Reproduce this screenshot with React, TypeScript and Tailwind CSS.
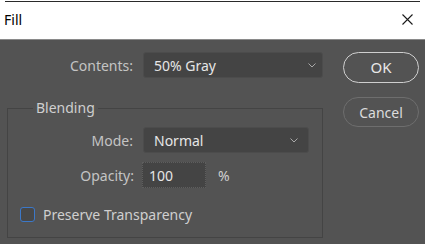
import React from "react";

const Chevron = () => (
  <svg width="8" height="5" viewBox="0 0 8 5" className="shrink-0">
    <path d="M0.5 0.5 L4 4 L7.5 0.5" fill="none" stroke="#a8a8a8" strokeWidth="1" />
  </svg>
);

export default function App() {
  return (
    <div
      className="w-[425px] h-[244px] bg-[#535353] overflow-hidden flex flex-col"
      style={{ fontFamily: '"Noto Sans", "Open Sans", sans-serif' }}
    >
      {/* Title bar */}
      <div className="h-[40px] bg-white border-b border-[#8a8a8a] flex flex-col shrink-0">
        <div className="mx-[5px] mt-[1px] h-[1px] bg-[#2a2a2a]" />
        <div className="flex-1 flex items-center justify-between pl-[4px] pr-[12px] pb-[2px]">
          <span className="text-[14px] text-black leading-none">Fill</span>
          <svg width="11" height="11" viewBox="0 0 11 11">
            <path d="M0.5 0.5 L10.5 10.5 M10.5 0.5 L0.5 10.5" stroke="#1a1a1a" strokeWidth="1.1" />
          </svg>
        </div>
      </div>

      {/* Body */}
      <div className="flex flex-1">
        <div className="w-[330px] pt-[12px]">
          {/* Contents row */}
          <div className="flex items-center h-[26px]">
            <div className="w-[133px] text-right text-[14px] text-[#c4c4c4]">Contents:</div>
            <div className="ml-[10px] w-[180px] h-[26px] bg-[#444444] border border-[#4c4c4c] rounded-[3px] flex items-center justify-between pl-[10px] pr-[6px]">
              <span className="text-[14px] text-[#e6e6e6]">50% Gray</span>
              <Chevron />
            </div>
          </div>

          {/* Blending group */}
          <div className="relative ml-[7px] mt-[30px] w-[316px] border border-[#444444] pt-[18px] pb-[12px]">
            <span className="absolute left-[25px] top-[-11px] px-[3px] bg-[#535353] text-[14px] text-[#cfcfcf] leading-[20px]">
              Blending
            </span>
            <div className="flex items-center h-[26px]">
              <div className="w-[125px] text-right text-[14px] text-[#c4c4c4]">Mode:</div>
              <div className="ml-[10px] w-[166px] h-[26px] bg-[#444444] border border-[#4c4c4c] rounded-[3px] flex items-center justify-between pl-[10px] pr-[10px]">
                <span className="text-[14px] text-[#e6e6e6]">Normal</span>
                <Chevron />
              </div>
            </div>
            <div className="flex items-center h-[26px] mt-[9px]">
              <div className="w-[126px] text-right text-[14px] text-[#c4c4c4]">Opacity:</div>
              <div className="ml-[8px] w-[64px] h-[26px] bg-[#444444] border border-dotted border-[#5e5e5e] flex items-center pl-[6px]">
                <span className="text-[14px] text-[#e6e6e6]">100</span>
              </div>
              <span className="ml-[12px] text-[14px] text-[#d0d0d0]">%</span>
            </div>
            <div className="flex items-center mt-[16px] pl-[12px]">
              <div className="w-[15px] h-[15px] rounded-[3px] border border-[#3c78c8] bg-[#484848]" />
              <span className="ml-[8px] text-[14px] text-[#cfcfcf]">Preserve Transparency</span>
            </div>
          </div>
        </div>

        {/* Buttons */}
        <div className="pt-[12px] pl-[13px] flex flex-col">
          <div className="w-[76px] h-[31px] rounded-full border-[1.5px] border-[#cfcfcf] flex items-center justify-center text-[15px] text-[#e8e8e8]">
            OK
          </div>
          <div className="mt-[14px] w-[76px] h-[30px] rounded-full border border-[#6e6e6e] flex items-center justify-center text-[14px] text-[#dcdcdc]">
            Cancel
          </div>
        </div>
      </div>
    </div>
  );
}
